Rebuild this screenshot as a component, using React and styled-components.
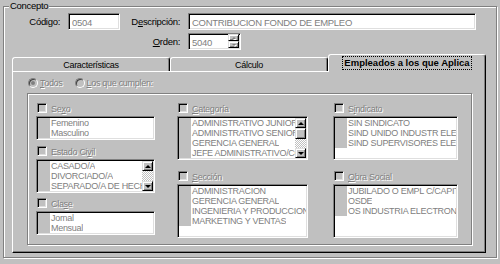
import React from "react";
import styled, { createGlobalStyle, css } from "styled-components";

const GlobalStyle = createGlobalStyle`
  html, body {
    margin: 0;
    padding: 0;
    background: #c0c0c0;
  }
  body {
    font-family: "Liberation Sans", Arial, sans-serif;
    font-size: 9px;
    letter-spacing: -0.3px;
    color: #000;
  }
`;

const Window = styled.div`
  width: 500px;
  height: 264px;
  box-sizing: border-box;
  padding: 6px 3px 0;
  background: #c0c0c0;
  overflow: hidden;
`;

// etched frame (gray line + white line)
const Group = styled.div`
  width: ${(p) => p.w}px;
  height: ${(p) => p.h}px;
  box-sizing: border-box;
  border: 1px solid #808080;
  box-shadow: inset 1px 1px 0 #fff, 1px 1px 0 #fff;
  display: flex;
  flex-direction: column;
  margin: ${(p) => p.margin || 0};
`;

const Legend = styled.div`
  margin: -7px 0 0 5px;
  padding: 0 1px;
  width: fit-content;
  line-height: 12px;
  font-size: 9.5px;
  background: #c0c0c0;
`;

const FieldGrid = styled.div`
  margin-top: 1px;
  display: grid;
  grid-template-columns: 56px 52px 52px 288px;
  grid-auto-rows: 17px;
  column-gap: 8px;
  row-gap: 3px;
`;

const Label = styled.label`
  grid-column: ${(p) => p.col};
  align-self: center;
  text-align: right;
  white-space: nowrap;
  line-height: 12px;
  font-size: 9.5px;
`;

const sunken = css`
  border: 1px solid;
  border-color: #808080 #fff #fff #808080;
  box-shadow: inset 1px 1px 0 #000, inset -1px -1px 0 #dfdfdf;
`;

const raised = css`
  border: 1px solid;
  border-color: #dfdfdf #000 #000 #dfdfdf;
  box-shadow: inset 1px 1px 0 #fff, inset -1px -1px 0 #808080;
  background: #c0c0c0;
`;

const TextBox = styled.div`
  grid-column: ${(p) => p.col};
  width: ${(p) => (p.w ? `${p.w}px` : "auto")};
  box-sizing: border-box;
  ${sunken};
  background: #fff;
  color: #808080;
  font-size: 9.5px;
  display: flex;
  align-items: center;
  padding: 1px 0 0 3px;
  overflow: hidden;
  white-space: nowrap;
`;

const TextValue = styled.span`
  flex: 1;
`;

const Spin = styled.div`
  width: 11px;
  align-self: stretch;
  margin: -1px 1px 1px 0;
  display: flex;
  flex-direction: column;
`;

const SpinButton = styled.div`
  flex: 1;
  box-sizing: border-box;
  ${raised};
  display: flex;
  align-items: center;
  justify-content: center;
`;

const Arrow = styled.span`
  width: 0;
  height: 0;
  border-left: ${(p) => p.size || 3}px solid transparent;
  border-right: ${(p) => p.size || 3}px solid transparent;
  ${(p) =>
    p.down
      ? css`border-top: ${p.size || 3}px solid ${p.color || "#000"};`
      : css`border-bottom: ${p.size || 3}px solid ${p.color || "#000"};`}
  ${(p) => p.etched && css`filter: drop-shadow(1px 1px 0 #fff);`}
`;

const Tabs = styled.div`
  margin: 4px 0 0 8px;
  width: 474px;
  display: flex;
  flex-direction: column;
`;

const TabStrip = styled.div`
  height: 17px;
  display: flex;
  align-items: flex-end;
`;

const Tab = styled.div`
  width: 158px;
  height: 14px;
  box-sizing: border-box;
  border: 1px solid;
  border-bottom: none;
  border-color: #fff #000 transparent #fff;
  border-radius: 3px 3px 0 0;
  box-shadow: inset -1px 0 0 #808080;
  background: #c0c0c0;
  display: flex;
  align-items: center;
  justify-content: center;
  padding-top: 1px;
  ${(p) =>
    p.active &&
    css`
      height: 18px;
      margin-bottom: -1px;
      padding-top: 0;
      padding-bottom: 2px;
      position: relative;
      z-index: 1;
      font-weight: bold;
      font-size: 9.5px;
      letter-spacing: 0;
    `}
`;

const FocusText = styled.span`
  outline: 1px dotted #000;
  outline-offset: 0;
  padding: 0 1px;
  line-height: 12px;
`;

const Panel = styled.div`
  height: 182px;
  box-sizing: border-box;
  border: 1px solid;
  border-color: #fff #000 #000 #fff;
  box-shadow: inset -1px -1px 0 #808080;
  display: flex;
  flex-direction: column;
`;

const RadioRow = styled.div`
  margin: 5px 0 0 15px;
  display: flex;
  gap: 12px;
  height: 12px;
  align-items: center;
`;

const RadioItem = styled.div`
  display: flex;
  align-items: center;
  gap: 2px;
`;

const Radio = styled.span`
  width: 10px;
  height: 10px;
  box-sizing: border-box;
  border-radius: 50%;
  border: 1px solid;
  border-color: #808080 #fff #fff #808080;
  box-shadow: inset 1px 1px 0 #404040;
  background: #c0c0c0;
  display: flex;
  align-items: center;
  justify-content: center;
  &::after {
    content: "";
    width: 4px;
    height: 4px;
    border-radius: 50%;
    background: ${(p) => (p.checked ? "#808080" : "transparent")};
  }
`;

const Etched = styled.span`
  color: #808080;
  text-shadow: 1px 1px 0 #fff;
  white-space: nowrap;
  line-height: 12px;
`;

const Columns = styled.div`
  padding: 9px 0 0 8px;
  display: flex;
  align-items: flex-start;
`;

const Column = styled.div`
  width: ${(p) => p.w}px;
  margin-left: ${(p) => p.gap || 0}px;
  display: flex;
  flex-direction: column;
`;

const Section = styled.div`
  margin-top: ${(p) => p.top || 0}px;
  display: flex;
  flex-direction: column;
`;

const Header = styled.div`
  height: 13px;
  padding-left: 1px;
  display: flex;
  align-items: flex-start;
  gap: 4px;
`;

const Check = styled.span`
  width: 10px;
  height: 10px;
  box-sizing: border-box;
  ${sunken};
  background: #c0c0c0;
`;

const ListBox = styled.div`
  height: ${(p) => p.rows * 10 + 4}px;
  box-sizing: border-box;
  ${sunken};
  background: #fff;
  padding: 1px;
  display: flex;
  overflow: hidden;
`;

const Items = styled.div`
  flex: 1;
  min-width: 0;
  overflow: hidden;
`;

const Item = styled.div`
  height: 10px;
  display: flex;
  line-height: 10px;
`;

const ItemMark = styled.span`
  flex: none;
  width: 12px;
  background: #c0c0c0;
`;

const ItemText = styled.span`
  padding-left: 1px;
  color: #808080;
  white-space: nowrap;
  overflow: hidden;
`;

const ScrollBar = styled.div`
  width: 11px;
  flex: none;
  display: flex;
  flex-direction: column;
`;

const ScrollButton = styled.div`
  height: ${(p) => p.h || 10}px;
  flex: none;
  box-sizing: border-box;
  ${raised};
  display: flex;
  align-items: center;
  justify-content: center;
`;

const Track = styled.div`
  flex: 1;
  background: repeating-conic-gradient(#c0c0c0 0% 25%, #fff 0% 50%) 0 0 / 2px 2px;
`;

const columns = [
  {
    w: 119,
    sections: [
      { label: ["Se", "x", "o"], rows: 2, items: ["Femenino", "Masculino"] },
      {
        label: ["Estado Ci", "v", "il"],
        rows: 3,
        top: 6,
        scroll: "empty",
        items: ["CASADO/A", "DIVORCIADO/A", "SEPARADO/A DE HECHO"],
      },
      { label: ["Cla", "s", "e"], rows: 2, top: 5, items: ["Jornal", "Mensual"] },
    ],
  },
  {
    w: 131,
    gap: 22,
    sections: [
      {
        label: ["", "C", "ategoría"],
        rows: 4,
        scroll: "thumb",
        items: [
          "ADMINISTRATIVO JUNIOR",
          "ADMINISTRATIVO SENIOR",
          "GERENCIA GENERAL",
          "JEFE ADMINISTRATIVO/CONTABLE",
        ],
      },
      {
        label: ["", "S", "ección"],
        rows: 5,
        top: 11,
        items: [
          "ADMINISTRACION",
          "GERENCIA GENERAL",
          "INGENIERIA Y PRODUCCION",
          "MARKETING Y VENTAS",
        ],
      },
    ],
  },
  {
    w: 125,
    gap: 25,
    sections: [
      {
        label: ["S", "i", "ndicato"],
        rows: 4,
        items: [
          "SIN SINDICATO",
          "SIND UNIDO INDUSTR ELECTRONICA",
          "SIND SUPERVISORES ELECTRONICA",
        ],
      },
      {
        label: ["", "O", "bra Social"],
        rows: 5,
        top: 11,
        items: [
          "JUBILADO O EMPL C/CAPITAL",
          "OSDE",
          "OS INDUSTRIA ELECTRONICA",
        ],
      },
    ],
  },
];

const AccessLabel = ({ parts }) => (
  <>
    {parts[0]}
    <u>{parts[1]}</u>
    {parts[2]}
  </>
);

const Scroll = ({ kind }) => (
  <ScrollBar>
    <ScrollButton>
      <Arrow size={3} />
    </ScrollButton>
    {kind === "thumb" && <ScrollButton h={11} />}
    <Track />
    <ScrollButton>
      <Arrow size={3} down />
    </ScrollButton>
  </ScrollBar>
);

const FilterSection = ({ section }) => (
  <Section top={section.top}>
    <Header>
      <Check />
      <Etched>
        <AccessLabel parts={section.label} />
      </Etched>
    </Header>
    <ListBox rows={section.rows}>
      <Items>
        {section.items.map((item) => (
          <Item key={item}>
            <ItemMark />
            <ItemText>{item}</ItemText>
          </Item>
        ))}
      </Items>
      {section.scroll && <Scroll kind={section.scroll} />}
    </ListBox>
  </Section>
);

const App = () => {
  return (
    <Window>
      <GlobalStyle />
      <Group w={494} h={252}>
        <Legend>Concepto</Legend>
        <FieldGrid>
          <Label col={1}>
            Códi<u>g</u>o:
          </Label>
          <TextBox col={2}>
            <TextValue>0504</TextValue>
          </TextBox>
          <Label col={3}>
            D<u>e</u>scripción:
          </Label>
          <TextBox col={4}>
            <TextValue>CONTRIBUCION FONDO DE EMPLEO</TextValue>
          </TextBox>
          <Label col={3}>
            <u>O</u>rden:
          </Label>
          <TextBox col={4} w={53}>
            <TextValue>5040</TextValue>
            <Spin>
              <SpinButton>
                <Arrow size={2} color="#808080" etched />
              </SpinButton>
              <SpinButton>
                <Arrow size={2} color="#808080" etched down />
              </SpinButton>
            </Spin>
          </TextBox>
        </FieldGrid>

        <Tabs>
          <TabStrip>
            <Tab>Características</Tab>
            <Tab>Cálculo</Tab>
            <Tab active>
              <FocusText>Empleados a los que Aplica</FocusText>
            </Tab>
          </TabStrip>
          <Panel>
            <RadioRow>
              <RadioItem>
                <Radio checked />
                <Etched>
                  <u>T</u>odos
                </Etched>
              </RadioItem>
              <RadioItem>
                <Radio />
                <Etched>
                  <u>L</u>os que cumplen:
                </Etched>
              </RadioItem>
            </RadioRow>
            <Group w={445} h={152} margin="4px 0 0 14px">
              <Columns>
                {columns.map((col, i) => (
                  <Column key={i} w={col.w} gap={col.gap}>
                    {col.sections.map((s) => (
                      <FilterSection key={s.label.join("")} section={s} />
                    ))}
                  </Column>
                ))}
              </Columns>
            </Group>
          </Panel>
        </Tabs>
      </Group>
    </Window>
  );
};

export default App;
